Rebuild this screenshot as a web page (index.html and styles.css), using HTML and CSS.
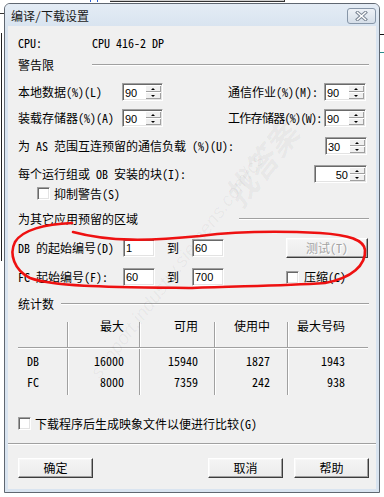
FILE: index.html
```html
<!DOCTYPE html>
<html lang="zh-CN">
<head>
<meta charset="utf-8">
<title>编译/下载设置</title>
<link rel="stylesheet" href="styles.css">
</head>
<body>
<div class="desk">
  <div class="bg-top"></div>
  <div class="bg-top-blue"></div>
  <div class="bg-left"></div>
  <div class="bg-left-h"></div>
  <div class="bg-right-a"></div>
  <div class="bg-right-b"></div>

  <div class="dialog">
    <div class="titlebar">
      <span class="title">编译/下载设置</span>
      <span class="close">
        <svg width="13" height="10" viewBox="0 0 13 10">
          <path d="M2.5 1.5 L10.5 8.5 M10.5 1.5 L2.5 8.5" stroke="#7d8896" stroke-width="3.4" stroke-linecap="square" fill="none"/>
          <path d="M2.5 1.5 L10.5 8.5 M10.5 1.5 L2.5 8.5" stroke="#ffffff" stroke-width="1.4" stroke-linecap="square" fill="none"/>
        </svg>
      </span>
    </div>
    <div class="client">
      <div class="row r-cpu"><span class="cpu-lbl">CPU:</span><span>CPU 416-2 DP</span></div>

      <div class="grp g1"><span>警告限</span><i class="etch e1"></i></div>

      <div class="row r-spin r1">
        <span class="lbl-a">本地数据(%)(L)</span>
        <div class="spin s41"><span class="val">90</span><span class="btns"><i class="up"></i><i class="dn"></i></span></div>
        <span class="lbl-b">通信作业(%)(M):</span>
        <div class="spin s42"><span class="val">90</span><span class="btns"><i class="up"></i><i class="dn"></i></span></div>
      </div>

      <div class="row r-spin r2">
        <span class="lbl-a">装载存储器(%)(A)</span>
        <div class="spin s41"><span class="val">90</span><span class="btns"><i class="up"></i><i class="dn"></i></span></div>
        <span class="lbl-b tight">工作存储器(%)(W):</span>
        <div class="spin s42"><span class="val">90</span><span class="btns"><i class="up"></i><i class="dn"></i></span></div>
      </div>

      <div class="row r-spin r3">
        <span class="lbl-fill">为 AS 范围互连预留的通信负载 (%)(U):</span>
        <div class="spin s42"><span class="val">30</span><span class="btns"><i class="up"></i><i class="dn"></i></span></div>
      </div>

      <div class="row r-spin r4">
        <span class="lbl-fill">每个运行组或 OB 安装的块(I):</span>
        <div class="spin s53"><span class="val right">50</span><span class="btns"><i class="up"></i><i class="dn"></i></span></div>
      </div>

      <div class="row r-cb cb1"><span class="cb"></span><span class="cb-txt">抑制警告(S)</span></div>

      <div class="grp g2"><span>为其它应用预留的区域</span><i class="etch e2"></i></div>

      <div class="row r-db">
        <span class="lbl-c">DB 的起始编号(D)</span>
        <span class="field">1</span>
        <span class="to">到</span>
        <span class="field f2">60</span>
        <span class="btn btn-test">测试(T)</span>
      </div>

      <div class="row r-fc">
        <span class="lbl-c">FC 起始编号(F):</span>
        <span class="field">60</span>
        <span class="to">到</span>
        <span class="field f2">700</span>
        <span class="cb cb-zip"></span><span class="cb-txt">压缩(C)</span>
      </div>

      <div class="grp g3"><span>统计数</span><i class="etch e3"></i></div>

      <div class="stats">
        <div class="st-row st-head"><span></span><span>最大</span><span>可用</span><span>使用中</span><span>最大号码</span></div>
        <div class="st-row st-db"><span>DB</span><span>16000</span><span>15940</span><span>1827</span><span>1943</span></div>
        <div class="st-row st-fc"><span>FC</span><span>8000</span><span>7359</span><span>242</span><span>938</span></div>
      </div>

      <div class="row r-cb cb2"><span class="cb"></span><span class="cb-txt">下载程序后生成映象文件以便进行比较(G)</span></div>

      <div class="sep"></div>

      <div class="row r-btns">
        <span class="btn">确定</span>
        <span class="btn b-cancel">取消</span>
        <span class="btn b-help">帮助</span>
      </div>
    </div>
  </div>

  <div class="wm wm-cn">找答案</div>
  <div class="wm wm-url">support.industry.siemens.com/cs</div>

  <svg class="markup" width="384" height="497" viewBox="0 0 384 497">
    <path d="M72 223 C45 224 22 230 15 242 C9 254 14 270 30 278 C55 287 110 287 192 288 C240 286 280 286 325 283 C352 278 366 265 365 250 C364 240 350 235 320 233 C280 231 240 231 200 236 C150 241 110 242 73 232" stroke="#ee1111" stroke-width="2.6" fill="none" stroke-linecap="round" stroke-linejoin="round"/>
  </svg>
</div>
</body>
</html>
```

FILE: styles.css
```css
html, body {
  margin: 0;
  padding: 0;
}
body {
  width: 384px;
  height: 497px;
  overflow: hidden;
  background: #ffffff;
  font-family: "Noto Sans Mono CJK SC", "Noto Sans CJK SC", sans-serif;
  font-size: 12px;
  color: #000;
}
.desk {
  position: relative;
  width: 384px;
  height: 497px;
}

/* background window fragments */
.bg-top {
  position: absolute;
  left: 110px;
  top: 0;
  width: 174px;
  height: 1px;
  background: #cfcfcf;
  border-bottom: 1px solid #333;
  border-right: 1px solid #333;
}
.bg-top-blue {
  position: absolute;
  left: 90px;
  top: 0;
  width: 6px;
  height: 2px;
  border-left: 1px solid #2b5fd0;
  border-right: 1px solid #2b5fd0;
}
.bg-left {
  position: absolute;
  left: 1px;
  top: 33px;
  width: 1px;
  height: 228px;
  background: #222;
}
.bg-left-h {
  position: absolute;
  left: 0;
  top: 13px;
  width: 4px;
  height: 1px;
  background: #333;
}
.bg-right-a {
  position: absolute;
  left: 380px;
  top: 34px;
  width: 4px;
  height: 1px;
  background: #111;
}
.bg-right-b {
  position: absolute;
  left: 380px;
  top: 52px;
  width: 4px;
  height: 1px;
  background: #2a8a8a;
}

/* dialog window */
.dialog {
  position: absolute;
  left: 4px;
  top: 3px;
  width: 376px;
  height: 490px;
  box-sizing: border-box;
  border: 1px solid #5f6771;
  border-radius: 6px 6px 0 0;
  background: #d9e4f0;
  display: flex;
  flex-direction: column;
}
.titlebar {
  height: 22px;
  display: flex;
  align-items: center;
  padding-left: 6px;
  background: linear-gradient(#e4ecf5, #d9e4f0);
  border-radius: 5px 5px 0 0;
}
.title {
  color: #1a1a1a;
  line-height: 14px;
  margin-top: 1px;
}
.close {
  margin-left: auto;
  margin-right: 3px;
  width: 27px;
  height: 14px;
  border: 1px solid #8796a8;
  border-radius: 3px;
  background: linear-gradient(#eef2f7, #d5dee8);
  display: flex;
  align-items: center;
  justify-content: center;
  margin-top: 1px;
}
.close svg { display: block; }

.client {
  flex: 1;
  margin: 0 3px 3px 3px;
  background: #f0f0f0;
  padding: 0 7px 0 10px;
  display: flex;
  flex-direction: column;
}

.row {
  display: flex;
  align-items: center;
  line-height: 14px;
}
.r-cpu { height: 14px; margin-top: 10px; }
.cpu-lbl { width: 74px; }

.grp {
  display: flex;
  align-items: center;
  height: 14px;
  line-height: 14px;
}
.g1 { margin-top: 8px; }
.g2 { margin-top: 12px; }
.g3 { margin-top: 11px; }
.etch {
  display: block;
  margin-left: auto;
  height: 0;
  border-top: 1px solid #a0a0a0;
  border-bottom: 1px solid #ffffff;
}
.e1 { width: 277px; }
.e2 { width: 130px; }
.e3 { width: 308px; }

.r-spin { height: 18px; }
.r1 { margin-top: 11px; }
.r2 { margin-top: 8px; }
.r3 { margin-top: 10px; }
.r4 { margin-top: 10px; }
.lbl-a { width: 104px; white-space: nowrap; }
.lbl-b { width: 96px; margin-left: 65px; white-space: nowrap; }
.lbl-b.tight { letter-spacing: -0.7px; }
.lbl-fill { flex: 1; white-space: nowrap; }
.r3 .spin, .r4 .spin { margin-right: 2px; }

/* sunken controls */
.spin, .field {
  box-sizing: border-box;
  height: 18px;
  background: #fff;
  border: 1px solid;
  border-color: #a0a0a0 #ffffff #ffffff #a0a0a0;
  box-shadow: inset 1px 1px 0 #696969, inset -1px -1px 0 #e3e3e3;
  font-family: "Liberation Sans", Arial, sans-serif;
  font-size: 11px;
  line-height: 14px;
}
.spin {
  display: flex;
  padding: 1px;
}
.s41 { width: 41px; }
.s42 { width: 42px; }
.s53 { width: 53px; }
.val {
  flex: 1;
  padding-left: 1px;
  padding-top: 1px;
}
.val.right { text-align: right; padding-right: 1px; }
.btns {
  width: 16px;
  display: flex;
  flex-direction: column;
}
.btns i {
  flex: 1;
  display: flex;
  align-items: center;
  justify-content: center;
  background: #f0f0f0;
  box-shadow: inset 1px 1px 0 #ffffff, inset -1px -1px 0 #a0a0a0;
}
.btns i::after {
  content: "";
  width: 0;
  height: 0;
  border-left: 2px solid transparent;
  border-right: 2px solid transparent;
}
.btns .up::after { border-bottom: 2px solid #000; }
.btns .dn::after { border-top: 2px solid #000; }

.field {
  width: 32px;
  padding: 1px 0 0 2px;
}

.r-cb { height: 13px; }
.cb1 { margin-top: 4px; padding-left: 19px; }
.cb2 { margin-top: 22px; }
.cb {
  box-sizing: border-box;
  width: 13px;
  height: 13px;
  background: #fff;
  border: 1px solid;
  border-color: #a0a0a0 #ffffff #ffffff #a0a0a0;
  box-shadow: inset 1px 1px 0 #696969, inset -1px -1px 0 #e3e3e3;
  flex: none;
}
.cb-txt { margin-left: 4px; white-space: nowrap; }

.r-db { height: 20px; margin-top: 12px; }
.r-fc { height: 18px; margin-top: 10px; }
.lbl-c { width: 105px; white-space: nowrap; }
.to { margin-left: 12px; width: 12px; }
.f2 { margin-left: 13px; }
.cb-zip { margin-left: 62px; }
.r-fc .cb-txt { margin-left: 5px; }

.btn {
  box-sizing: border-box;
  display: flex;
  align-items: center;
  justify-content: center;
  width: 75px;
  height: 20px;
  background: linear-gradient(#f4f4f4, #ebebeb);
  border: 1px solid;
  border-color: #ffffff #3c3c3c #3c3c3c #ffffff;
  box-shadow: inset -1px -1px 0 #a0a0a0, inset 1px 1px 0 #f8f8f8;
}
.btn-test {
  margin-left: 62px;
  width: 82px;
  color: #a3a3a3;
  text-shadow: 1px 1px 0 #ffffff;
}

/* statistics table */
.stats {
  margin-top: 7px;
  width: 350px;
  height: 77px;
  box-sizing: border-box;
  padding-top: 1px;
  background:
    linear-gradient(#a0a0a0, #a0a0a0) 0 29px / 100% 1px no-repeat,
    linear-gradient(#ffffff, #ffffff) 0 30px / 100% 1px no-repeat,
    linear-gradient(#a0a0a0, #a0a0a0) 49px 4px / 1px 73px no-repeat,
    linear-gradient(#ffffff, #ffffff) 50px 4px / 1px 73px no-repeat,
    linear-gradient(#a0a0a0, #a0a0a0) 121px 4px / 1px 73px no-repeat,
    linear-gradient(#ffffff, #ffffff) 122px 4px / 1px 73px no-repeat,
    linear-gradient(#a0a0a0, #a0a0a0) 196px 4px / 1px 73px no-repeat,
    linear-gradient(#ffffff, #ffffff) 197px 4px / 1px 73px no-repeat,
    linear-gradient(#a0a0a0, #a0a0a0) 269px 4px / 1px 73px no-repeat,
    linear-gradient(#ffffff, #ffffff) 270px 4px / 1px 73px no-repeat;
}
.st-row {
  display: grid;
  grid-template-columns: 49px 72px 75px 73px 81px;
  height: 14px;
  line-height: 14px;
}
.st-row span { text-align: right; white-space: nowrap; }
.st-row span:nth-child(1) { text-align: left; padding-left: 9px; }
.st-row span:nth-child(2) { padding-right: 15px; }
.st-row span:nth-child(3) { padding-right: 16px; }
.st-row span:nth-child(4) { padding-right: 17px; }
.st-row span:nth-child(5) { padding-right: 23px; }
.st-db { margin-top: 21px; }
.st-fc { margin-top: 7px; }

.sep {
  margin: 13px -7px 0 -10px;
  height: 0;
  border-top: 1px solid #a0a0a0;
  border-bottom: 1px solid #ffffff;
}
.r-btns { height: 20px; margin-top: 13px; }
.b-cancel { margin-left: 115px; }
.b-help { margin-left: 11px; }

/* overlays */
.wm {
  position: absolute;
  color: rgba(0, 0, 0, 0.045);
  font-style: italic;
  white-space: nowrap;
  pointer-events: none;
  font-family: "Liberation Sans", "Noto Sans CJK SC", sans-serif;
}
.wm-cn {
  left: 212px;
  top: 140px;
  font-size: 32px;
  font-weight: bold;
  transform: rotate(-52deg);
}
.wm-url {
  left: 40px;
  top: 255px;
  font-size: 19px;
  transform: rotate(-53deg);
}
.markup {
  position: absolute;
  left: 0;
  top: 0;
  pointer-events: none;
}
```
